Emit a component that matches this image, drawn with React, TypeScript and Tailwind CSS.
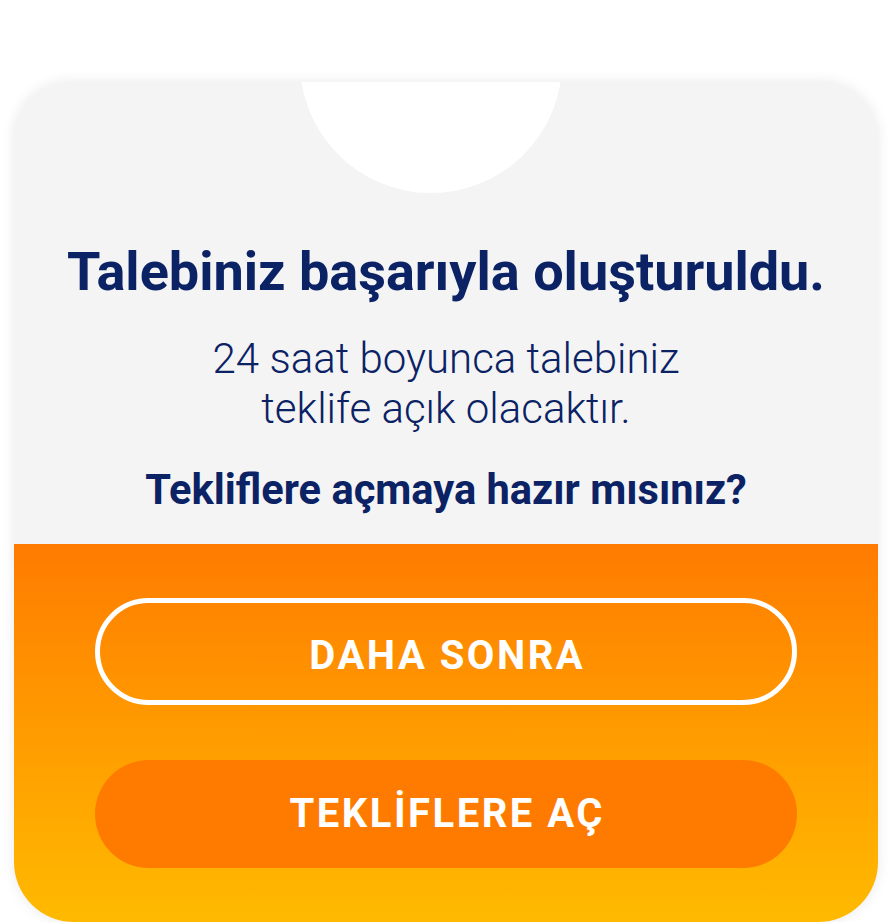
export default function App() {
  return (
    <div className="h-[922px] overflow-hidden bg-white px-[14px] pt-[82px]" style={{ fontFamily: 'Roboto, "Liberation Sans", sans-serif' }}>
      <div className="relative flex h-[840px] flex-col overflow-hidden rounded-t-[56px] rounded-b-[60px] bg-[#f4f4f4] shadow-[0_0_14px_rgba(0,0,0,0.09)]">
        {/* notch cut out of the top edge */}
        <div className="absolute left-[286px] top-[-151px] h-[262px] w-[262px] rounded-full bg-white" />

        <div className="flex h-[462px] flex-col items-center pt-[158px] text-center text-[#0b2265]">
          <h1 className="text-[54px] font-bold leading-[64px]">Talebiniz başarıyla oluşturuldu.</h1>
          <p className="mt-[30px] text-[42px] font-light leading-[50px]">
            24 saat boyunca talebiniz
            <br />
            teklife açık olacaktır.
          </p>
          <p className="mt-[31px] text-[41.6px] font-bold leading-[50px]">Tekliflere açmaya hazır mısınız?</p>
        </div>

        <div className="flex flex-1 flex-col gap-[55px] bg-gradient-to-b from-[#ff7b00] to-[#ffba00] px-[81px] pt-[54px]">
          <button className="flex h-[107px] items-center justify-center rounded-full border-[5px] border-white pl-[2.5px] pt-[8px] text-[40px] font-bold tracking-[2.5px] text-white">
            DAHA SONRA
          </button>
          <button className="flex h-[108px] items-center justify-center rounded-full bg-[#ff7b00] pl-[2.5px] text-[40px] font-bold tracking-[2.5px] text-white">
            TEKLİFLERE AÇ
          </button>
        </div>
      </div>
    </div>
  );
}
